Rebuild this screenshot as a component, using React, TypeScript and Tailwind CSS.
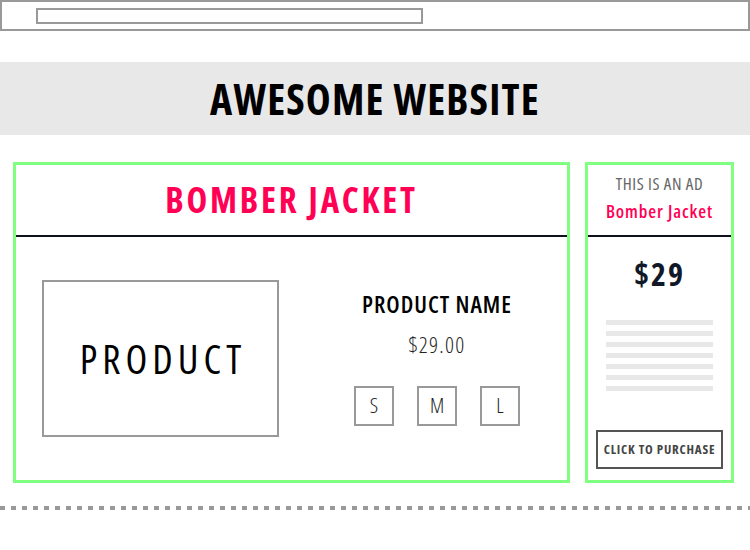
import React from 'react';

const sizes = ['S', 'M', 'L'];

const App = () => {
  return (
    <div className="w-[750px] h-[550px] bg-white font-['Open_Sans','DejaVu_Sans',sans-serif] font-stretch-condensed overflow-hidden">
      {/* Browser bar */}
      <div className="h-[31px] border-2 border-[#999999] pl-[34px] pt-[6px]">
        <div className="w-[387px] h-[16px] border-2 border-[#999999]" />
      </div>

      {/* Site header */}
      <div className="mt-[31px] h-[73px] bg-[#e8e8e8] flex items-center justify-center">
        <h1 className="text-[42px] font-bold text-black tracking-[1.2px]">AWESOME WEBSITE</h1>
      </div>

      <div className="flex pl-[13px] mt-[27px] gap-[15px]">
        {/* Product card */}
        <div className="w-[557px] h-[321px] border-[3px] border-[#80ff80] flex flex-col">
          <div className="h-[70px] flex items-center justify-center">
            <h2 className="text-[35px] font-bold text-[#ff0055] tracking-[2.8px]">BOMBER JACKET</h2>
          </div>
          <div className="h-[2px] bg-[#0f111a]" />
          <div className="flex-1 flex items-center pl-[26px]">
            <div className="w-[237px] h-[157px] border-2 border-[#999999] flex items-center justify-center">
              <span className="text-[40px] text-black tracking-[5px] pl-[5px]">PRODUCT</span>
            </div>
            <div className="ml-[29px] w-[258px] pt-[2px] flex flex-col items-center">
              <div className="text-[23.5px] font-semibold text-black leading-none tracking-[1px]">PRODUCT NAME</div>
              <div className="mt-[16px] text-[22px] font-light text-[#222] leading-none tracking-[1.3px]">$29.00</div>
              <div className="mt-[31px] flex gap-[23px]">
                {sizes.map(s => (
                  <div key={s} className="w-[40px] h-[40px] border-2 border-[#999999] flex items-center justify-center text-[21px] font-light text-[#222]">
                    {s}
                  </div>
                ))}
              </div>
            </div>
          </div>
        </div>

        {/* Ad */}
        <div className="w-[149px] h-[321px] border-[3px] border-[#80ff80] flex flex-col">
          <div className="h-[70px] pt-[10px] flex flex-col items-center">
            <div className="text-[17px] text-[#666666] leading-none tracking-[0.6px]">THIS IS AN AD</div>
            <div className="mt-[10px] text-[18px] font-semibold text-[#ff0055] leading-none tracking-[0.9px]">Bomber Jacket</div>
          </div>
          <div className="h-[2px] bg-[#0f111a]" />
          <div className="flex-1 flex flex-col items-center">
            <div className="mt-[21px] text-[32px] font-bold text-[#111827] leading-none tracking-[2px]">$29</div>
            <div className="mt-[30px] w-[107px] flex flex-col gap-[6px]">
              {[0, 1, 2, 3, 4, 5, 6].map(i => (
                <div key={i} className="h-[5px] bg-[#e8e8e8]" />
              ))}
            </div>
            <div className="mt-auto mb-[11px] w-[127px] h-[39px] border-2 border-[#555555] flex items-center justify-center text-[13px] font-bold text-[#444444] tracking-[0.8px]">
              CLICK TO PURCHASE
            </div>
          </div>
        </div>
      </div>

      {/* Footer dashed line */}
      <div className="mt-[23px] h-[4px] bg-[repeating-linear-gradient(90deg,#999999_0px,#999999_5px,transparent_5px,transparent_11px)]" />
    </div>
  );
};

export default App;
